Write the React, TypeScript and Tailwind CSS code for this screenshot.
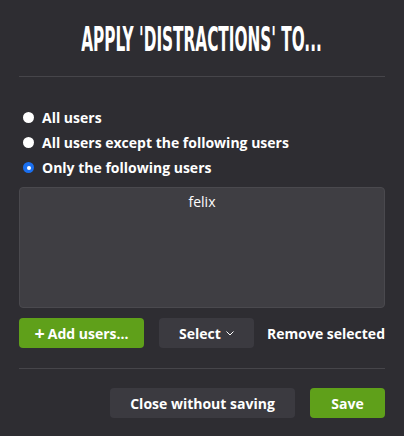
import React from 'react'

const body = { fontFamily: '"Open Sans", "Liberation Sans", sans-serif' }

function Radio({ checked, label }: { checked?: boolean; label: string }) {
  return (
    <div className="flex h-[25px] items-center">
      <span className="flex w-[23px] justify-start pl-[4px]">
        {checked ? (
          <span className="flex h-[11px] w-[11px] items-center justify-center rounded-full bg-[#1a6ff0]">
            <span className="h-[4px] w-[4px] rounded-full bg-white" />
          </span>
        ) : (
          <span className="h-[11px] w-[11px] rounded-full bg-white" />
        )}
      </span>
      <span className="text-[14px] font-bold text-white">{label}</span>
    </div>
  )
}

export default function App() {
  return (
    <div className="flex h-[436px] w-[404px] flex-col bg-[#2e2d32] px-[19px]" style={body}>
      {/* header */}
      <div className="flex h-[77px] items-center justify-center border-b border-[#46454a] pt-[2px]">
        <h1
          className="origin-center scale-x-[0.5] whitespace-nowrap text-[34px] font-bold leading-none text-white"
          style={{ fontFamily: '"Liberation Sans Narrow", "DejaVu Sans Condensed", sans-serif' }}
        >
          APPLY 'DISTRACTIONS' TO...
        </h1>
      </div>

      {/* options */}
      <div className="mt-[28px] flex flex-col">
        <Radio label="All users" />
        <Radio label="All users except the following users" />
        <Radio checked label="Only the following users" />
      </div>

      {/* user list */}
      <div className="mt-[7px] h-[121px] rounded-[4px] border border-[#4a494e] bg-[#3f3e43] pt-[3px] text-center text-[14px] text-white">
        felix
      </div>

      {/* list actions */}
      <div className="mt-[10px] flex h-[30px] items-center">
        <button className="flex h-[30px] w-[125px] items-center justify-center gap-[3px] rounded-[4px] bg-[#5fa01a] text-[14px] font-bold text-white">
          <span className="text-[18px] leading-none">+</span>Add users...
        </button>
        <button className="ml-[15px] flex h-[30px] w-[95px] items-center justify-center gap-[5px] rounded-[4px] bg-[#3b3a40] text-[14px] font-bold text-white">
          Select
          <svg width="8" height="5" viewBox="0 0 8 5" fill="none" stroke="white" strokeWidth="1">
            <path d="M0.5 0.5 L4 4 L7.5 0.5" />
          </svg>
        </button>
        <span className="ml-auto text-[14px] font-bold text-white">Remove selected</span>
      </div>

      {/* footer */}
      <div className="mt-[20px] flex h-[50px] items-end justify-end gap-[15px] border-t border-[#46454a]">
        <button className="flex h-[30px] w-[185px] items-center justify-center rounded-[4px] bg-[#3b3a40] text-[14px] font-bold text-white">
          Close without saving
        </button>
        <button className="flex h-[30px] w-[75px] items-center justify-center rounded-[4px] bg-[#5fa01a] text-[14px] font-bold text-white">
          Save
        </button>
      </div>
    </div>
  )
}
